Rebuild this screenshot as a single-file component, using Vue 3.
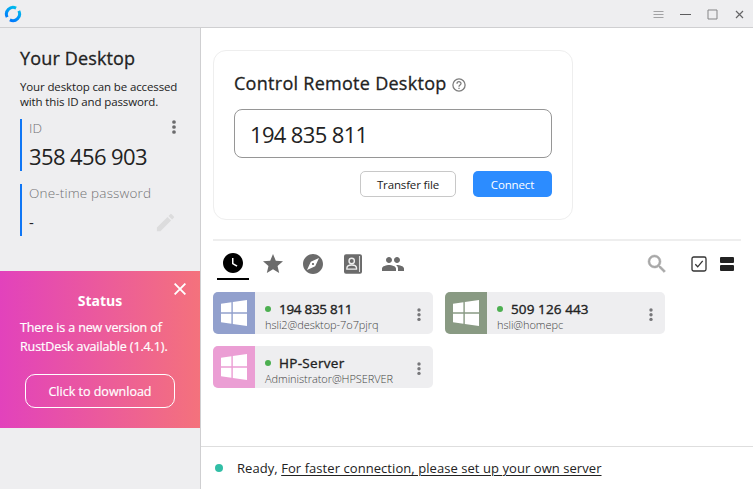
<script setup>
const peers = [
  { name: '194 835 811', user: 'hsli2@desktop-7o7pjrq', tone: 'blue', fit: 'numeric' },
  { name: '509 126 443', user: 'hsli@homepc', tone: 'green', fit: 'numeric wide' },
  { name: 'HP-Server', user: 'Administrator@HPSERVER', tone: 'pink', fit: 'named' },
]
const tabs = [
  { id: 'recent', d: 'M12 2C6.5 2 2 6.5 2 12s4.500 10 10 10 10-4.500 10-10S17.500 2 12 2zm3.550 13.800L11 13.100V7h1.500v5.200l4 2.400z' },
  { id: 'favorites', d: 'M12 17.270 18.180 21l-1.640-7.030L22 9.240l-7.190-.610L12 2 9.190 8.630 2 9.240l5.460 4.730L5.820 21z' },
  { id: 'discovered', d: 'M12 10.900c-.610 0-1.100.490-1.100 1.100s.490 1.100 1.100 1.100 1.100-.490 1.100-1.100-.490-1.100-1.100-1.100zM12 2C6.480 2 2 6.480 2 12s4.480 10 10 10 10-4.480 10-10S17.520 2 12 2zm2.190 12.190L6 18l3.810-8.190L18 6z' },
  { id: 'book' },
  { id: 'group', d: 'M16 11c1.660 0 2.990-1.340 2.990-3S17.660 5 16 5s-3 1.340-3 3 1.340 3 3 3zm-8 0c1.660 0 2.990-1.340 2.990-3S9.660 5 8 5 5 6.340 5 8s1.340 3 3 3zm0 2c-2.330 0-7 1.170-7 3.500V19h14v-2.500c0-2.330-4.670-3.500-7-3.500zm8 0c-.290 0-.620.020-.970.050 1.160.840 1.970 1.970 1.970 3.450V19h6v-2.500c0-2.330-4.670-3.500-7-3.500z' },
]
</script>

<template>
  <div class="window">
    <header class="titlebar">
      <svg class="logo" width="18" height="18" viewBox="0 0 18 18">
        <defs>
          <linearGradient id="ring" gradientUnits="userSpaceOnUse" x1="4" y1="16" x2="13" y2="1">
            <stop offset="0" stop-color="#0071ff" />
            <stop offset="1" stop-color="#00c4ea" />
          </linearGradient>
        </defs>
        <g fill="none" stroke="url(#ring)" stroke-width="3">
          <path d="M12.100 3.200A6.600 6.600 0 0 0 3.200 12.100" />
          <path d="M14.800 5.900A6.600 6.600 0 0 1 5.900 14.800" />
        </g>
      </svg>
      <div class="controls">
        <svg width="11" height="11" viewBox="0 0 11 11" stroke="#a2a2a4"><path d="M.5 2.500h10M.5 5.500h10M.5 8.500h10" /></svg>
        <svg width="11" height="11" viewBox="0 0 11 11" stroke="#5c5c5e"><path d="M0 5.500h11" /></svg>
        <svg width="11" height="11" viewBox="0 0 11 11" stroke="#858587" fill="none"><path d="M1 1h9v9H1z" /></svg>
        <svg width="11" height="11" viewBox="0 0 11 11" stroke="#656567" stroke-width="1.200"><path d="m2 2 7 7m0-7-7 7" /></svg>
      </div>
    </header>

    <div class="body">
      <aside class="sidebar">
        <h1 class="heading">Your Desktop</h1>
        <p class="description">Your desktop can be accessed<br />with this ID and password.</p>

        <section class="field">
          <div class="info">
            <div class="label">ID</div>
            <div class="id">358 456 903</div>
          </div>
          <svg class="dots" width="4" height="14" viewBox="0 0 4 14" fill="#6b6b6d"><circle cx="2" cy="2" r="1.850" /><circle cx="2" cy="7" r="1.850" /><circle cx="2" cy="12" r="1.850" /></svg>
        </section>

        <section class="field password">
          <div class="info">
            <div class="label">One-time password</div>
            <div class="dash">-</div>
          </div>
          <svg class="pencil" width="23" height="23" viewBox="0 0 24 24" fill="#dcdcdd"><path d="M3 17.250V21h3.750L17.810 9.940l-3.750-3.750zM20.710 7.040a1 1 0 0 0 0-1.410l-2.340-2.340a1 1 0 0 0-1.410 0l-1.830 1.830 3.750 3.750z" /></svg>
        </section>

        <section class="status">
          <svg class="close" width="12" height="12" viewBox="0 0 12 12" stroke="#fff" stroke-width="1.900"><path d="m.6.6 10.800 10.800m0-10.800L.6 11.400" /></svg>
          <h2 class="status-title">Status</h2>
          <p class="status-text">There is a new version of<br />RustDesk available (1.4.1).</p>
          <button class="download">Click to download</button>
        </section>
      </aside>

      <main class="main">
        <section class="connect-card">
          <h2 class="card-title">
            <span>Control Remote Desktop</span>
            <svg width="14" height="14" viewBox="0 0 14 14" fill="none" stroke="#7d7d7d" stroke-width="1.300"><circle cx="7" cy="7" r="6.100" /><path d="M5 5.700c0-2.700 4-2.600 4-.2 0 1.500-2 1.500-2 3.200M7 9.700V11" /></svg>
          </h2>
          <div class="remote-id">194 835 811</div>
          <div class="actions">
            <button class="btn transfer">Transfer file</button>
            <button class="btn connect">Connect</button>
          </div>
        </section>

        <section class="peers">
          <nav class="toolbar">
            <div v-for="tab in tabs" :key="tab.id" class="tab" :class="tab.id">
              <svg v-if="tab.d" width="24" height="24" viewBox="0 0 24 24" fill="currentColor"><path :d="tab.d" /></svg>
              <svg v-else width="24" height="24" viewBox="0 0 24 24" fill="none">
                <rect x="3" y="2.300" width="18" height="19.500" rx="2" fill="currentColor" />
                <path d="M18.500 4v16" stroke="#ddd" stroke-width="1.100" />
                <circle cx="10.700" cy="9" r="2.700" stroke="#eee" stroke-width="1.400" />
                <path d="M5.900 17.100v-1c0-4.200 9.600-4.200 9.600 0v1z" stroke="#eee" stroke-width="1.400" />
              </svg>
            </div>
            <div class="tools">
              <svg class="search" width="24" height="24" viewBox="0 0 24 24" fill="#a8a8a8" stroke="#a8a8a8" stroke-width=".5"><path d="M15.500 14h-.790l-.280-.270A6.470 6.470 0 0 0 16 9.500 6.500 6.500 0 1 0 9.500 16c1.610 0 3.090-.590 4.230-1.570l.270.280v.790l5 4.990L20.490 19zm-6 0a4.500 4.500 0 1 1 0-9 4.500 4.500 0 0 1 0 9z" /></svg>
              <svg class="check" width="16" height="16" viewBox="0 0 16 16" fill="none" stroke="#333"><rect x="1" y="1" width="14" height="14" rx="1.700" stroke-width="1.300" /><path d="m4.300 8.300 2.400 2.500 5-6" stroke-width="1.300" /></svg>
              <svg class="list" width="14" height="14" viewBox="0 0 14 14" fill="#222"><rect width="14" height="6" rx="1" /><rect y="8" width="14" height="6" rx="1" /></svg>
            </div>
          </nav>

          <div class="grid">
            <article v-for="peer in peers" :key="peer.name" class="peer">
              <div class="platform" :class="peer.tone">
                <svg width="26" height="26" viewBox="0 0 26 26" fill="#fff"><path d="M0 3.800 10.400 2.300V12.300H0zM11.800 2 26 0v12.300H11.800zM0 13.700h10.400v10L0 22.200zM11.800 13.700H26V26l-14.200-2z" /></svg>
              </div>
              <div class="peer-info">
                <div class="peer-name" :class="peer.fit"><i class="online"></i><span>{{ peer.name }}</span></div>
                <div class="peer-user">{{ peer.user }}</div>
              </div>
              <svg class="peer-menu" width="4" height="14" viewBox="0 0 4 14" fill="#77777a"><circle cx="2" cy="2" r="1.700" /><circle cx="2" cy="6.700" r="1.700" /><circle cx="2" cy="11.400" r="1.700" /></svg>
            </article>
          </div>
        </section>

        <footer class="footer">
          <i class="ready"></i>
          <span class="ready-text">Ready, <span class="link">For faster connection, please set up your own server</span></span>
        </footer>
      </main>
    </div>
  </div>
</template>

<style>
body {
  margin: 0;
  overflow: hidden;
}
</style>

<style scoped>
.window {
  box-sizing: border-box;
  width: 753px;
  height: 489px;
  display: flex;
  flex-direction: column;
  background: #fff;
  color: #222;
  font-family: "Open Sans", "Noto Sans", sans-serif;
  white-space: nowrap;
}
.window *,
.window *::before {
  box-sizing: border-box;
}
h1, h2, p {
  margin: 0;
}
svg {
  display: block;
  flex: none;
}
button {
  font-family: inherit;
  padding: 0;
}
.titlebar {
  height: 28px;
  flex: none;
  display: flex;
  align-items: center;
  justify-content: space-between;
  padding: 0 8px 0 4px;
  background: #eeeef0;
  border-bottom: 1px solid #cfcfd1;
}
.controls {
  display: flex;
  gap: 16px;
  padding-top: 1px;
}
.body {
  flex: 1;
  min-height: 0;
  display: flex;
}
.sidebar {
  width: 201px;
  flex: none;
  background: #eeeef0;
  border-right: 1px solid #cfcfd1;
}
.heading {
  margin: 17px 0 0 20px;
  font-size: 18px;
  line-height: 26px;
  font-weight: 500;
  letter-spacing: 0.15px;
  -webkit-text-stroke: 0.3px currentColor;
}
.description {
  margin: 8px 0 0 20px;
  font-size: 11.5px;
  line-height: 15px;
  letter-spacing: -0.13px;
}
.field {
  width: 160px;
  height: 52px;
  margin: 10px 0 0 20px;
  padding-left: 7px;
  border-left: 2px solid #0f76f5;
  display: flex;
  justify-content: space-between;
}
.password {
  margin-top: 13px;
}
.label {
  font-size: 13.500px;
  line-height: 18px;
  letter-spacing: 0.18px;
  color: #727274;
  font-weight: 300;
}
.id {
  margin-top: 4px;
  font-size: 22px;
  line-height: 30px;
  letter-spacing: -0.6px;
}
.dots {
  margin: 1px 4px 0 0;
}
.dash {
  margin-top: 10px;
  font-size: 15px;
  line-height: 20px;
}
.pencil {
  margin: 27px 3px 0 0;
}
.status {
  position: relative;
  height: 157px;
  margin-top: 35px;
  padding-top: 20px;
  background: linear-gradient(90deg, #e242bc, #f4727c);
  color: #fff;
}
.close {
  position: absolute;
  right: 14px;
  top: 12px;
}
.status-title {
  text-align: center;
  font-size: 14px;
  line-height: 20px;
  font-weight: 700;
}
.status-text {
  margin: 7px 0 0 20px;
  font-size: 12.500px;
  line-height: 19px;
  letter-spacing: -0.12px;
  -webkit-text-stroke: 0.2px currentColor;
}
.download {
  display: block;
  width: 150px;
  height: 34px;
  margin: 18px 0 0 25px;
  border: 1px solid #fff;
  border-radius: 10px;
  background: none;
  color: #fff;
  font-size: 12.500px;
  -webkit-text-stroke: 0.2px currentColor;
}
.main {
  flex: 1;
  min-width: 0;
  display: flex;
  flex-direction: column;
}
.connect-card {
  width: 360px;
  height: 170px;
  flex: none;
  margin: 22px 0 0 12px;
  padding: 19px 20px 0;
  border: 1px solid #eee;
  border-radius: 13px;
}
.card-title {
  display: flex;
  align-items: center;
  gap: 5px;
  font-size: 18px;
  line-height: 26px;
  font-weight: 500;
  letter-spacing: 0.28px;
  -webkit-text-stroke: 0.3px currentColor;
}
.card-title svg {
  margin-top: 3px;
}
.remote-id {
  height: 49px;
  margin-top: 13px;
  padding: 1px 0 0 15px;
  border: 1px solid #969696;
  border-radius: 8px;
  font-size: 22px;
  line-height: 47px;
  letter-spacing: -0.65px;
}
.actions {
  display: flex;
  justify-content: flex-end;
  gap: 17px;
  margin-top: 13px;
}
.btn {
  height: 26px;
  border-radius: 5px;
  font-size: 11.500px;
  letter-spacing: -0.15px;
}
.transfer {
  width: 96px;
  border: 1px solid #c8c8c8;
  background: #fff;
  color: #222;
}
.connect {
  width: 79px;
  border: 0;
  background: #2c8cff;
  color: #fff;
}
.peers {
  flex: 1;
  margin: 19px 12px 0;
  border-top: 2px solid #eee;
}
.toolbar {
  height: 51px;
  padding: 7px 0 0 4px;
  display: flex;
  gap: 8px;
}
.tab {
  width: 32px;
  height: 32px;
  padding: 4px 4px 0;
  color: #6b6b6b;
}
.recent {
  color: #000;
  border-bottom: 2px solid #000;
  padding-top: 3px;
}
.tools {
  margin-left: auto;
  height: 32px;
  display: flex;
  align-items: center;
  padding-right: 7px;
}
.check {
  margin-left: 22px;
}
.list {
  margin-left: 13px;
}
.grid {
  display: grid;
  grid-template-columns: 220px 220px;
  gap: 12px;
}
.peer {
  height: 42px;
  display: flex;
  border-radius: 5px;
  overflow: hidden;
  background: #eeeef0;
}
.platform {
  width: 42px;
  display: grid;
  place-items: center;
}
.blue { background: #92a0cd; }
.green { background: #899a83; }
.pink { background: #eb9ed4; }
.peer-info {
  flex: 1;
  padding: 8px 0 0 10px;
}
.peer-name {
  display: flex;
  align-items: center;
  font-size: 13.500px;
  line-height: 18px;
  -webkit-text-stroke: 0.35px currentColor;
}
.numeric {
  letter-spacing: -0.3px;
}
.wide {
  letter-spacing: 0.1px;
}
.named {
  letter-spacing: 0.3px;
}
.online {
  width: 6px;
  height: 6px;
  margin-right: 8px;
  border-radius: 50%;
  background: #4caf50;
}
.peer-user {
  font-size: 11px;
  line-height: 13px;
  letter-spacing: -0.06px;
  font-weight: 300;
  color: #444;
}
.peer-menu {
  margin: 16px 12px 0 0;
}
.footer {
  height: 43px;
  flex: none;
  display: flex;
  align-items: center;
  padding-left: 14px;
  border-top: 1px solid #dedede;
}
.ready {
  width: 8px;
  height: 8px;
  margin-right: 14px;
  border-radius: 50%;
  background: #32bea6;
}
.ready-text {
  font-size: 13px;
  line-height: 20px;
  letter-spacing: 0.06px;
}
.link {
  text-decoration: underline;
  text-decoration-thickness: 1px;
  text-underline-offset: 2px;
}
</style>
